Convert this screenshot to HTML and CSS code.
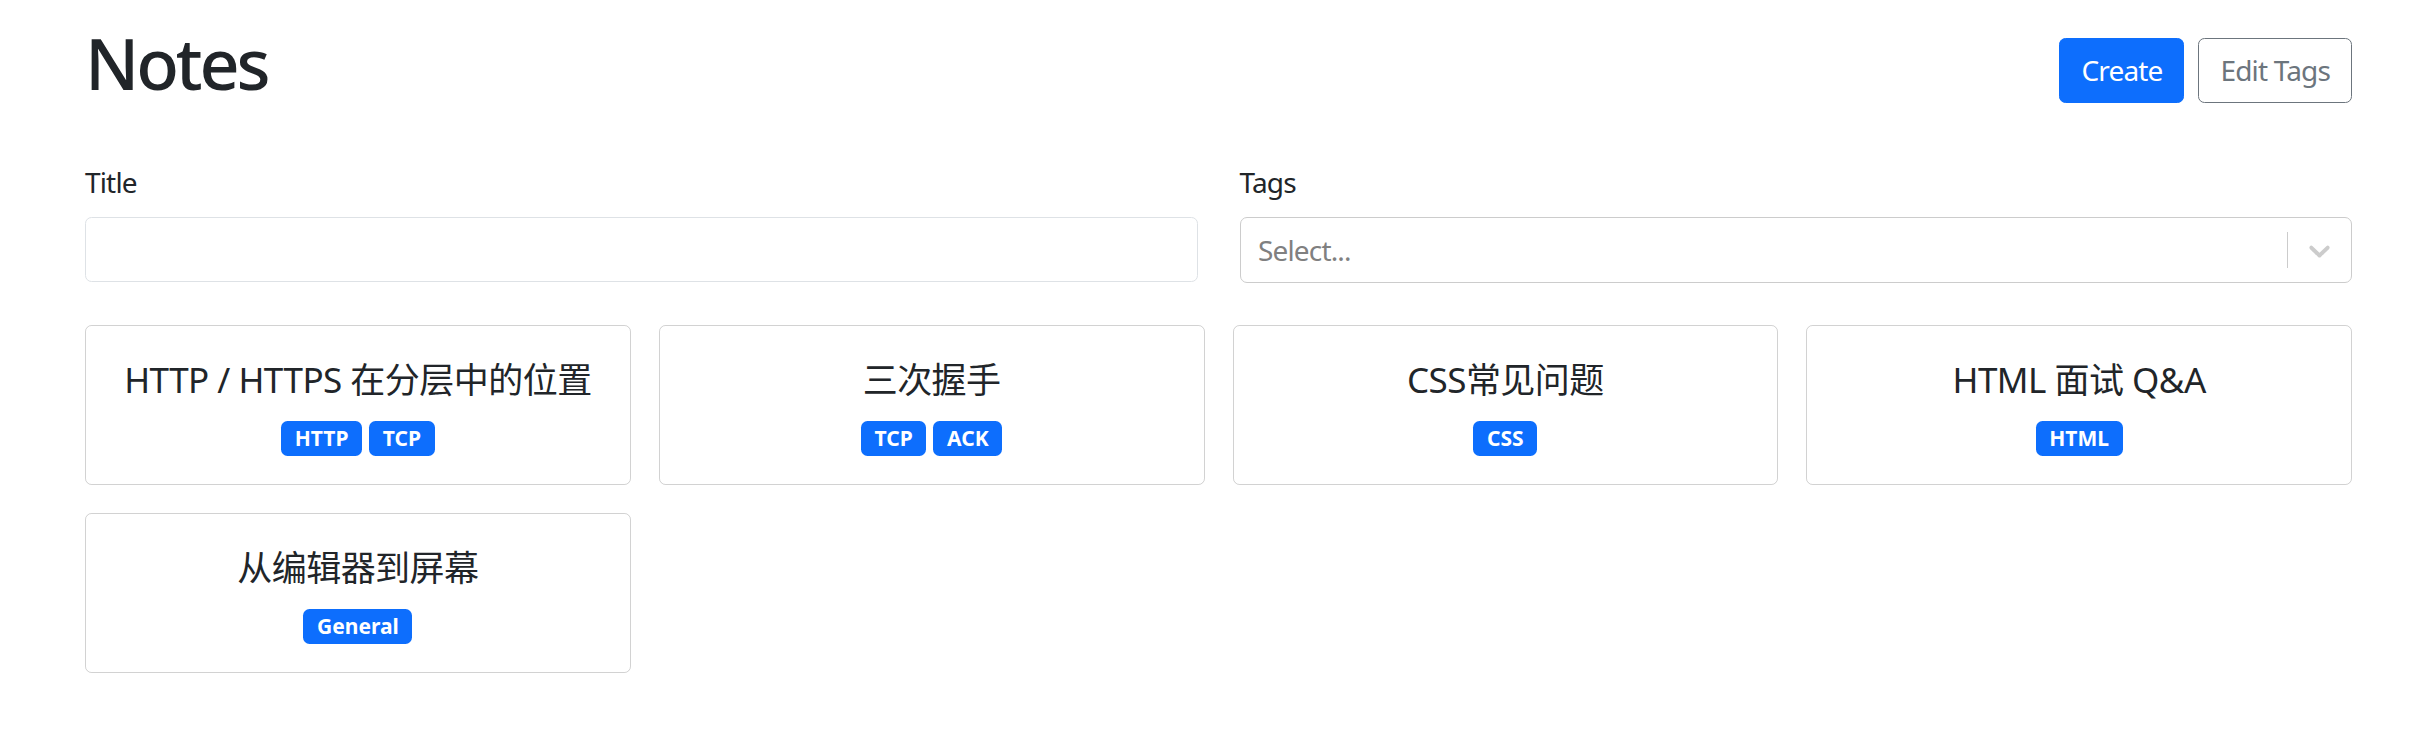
FILE: index.html
```html
<!DOCTYPE html>
<html lang="zh">
<head>
<meta charset="utf-8">
<title>Notes</title>
<link rel="stylesheet" href="styles.css">
</head>
<body>
<div class="page">
  <div class="header">
    <h1 class="heading">Notes</h1>
    <div class="actions">
      <button class="btn btn-primary">Create</button>
      <button class="btn btn-outline">Edit Tags</button>
    </div>
  </div>
  <form class="filters">
    <div class="field">
      <label class="label" for="title">Title</label>
      <input class="input" id="title" type="text">
    </div>
    <div class="field">
      <label class="label">Tags</label>
      <div class="select">
        <div class="select-value"><span class="placeholder">Select...</span></div>
        <div class="select-indicators">
          <span class="separator"></span>
          <span class="dropdown">
            <svg viewBox="0 0 20 20" width="35" height="35" aria-hidden="true"><path fill="currentColor" d="M4.516 7.548c0.436-0.446 1.043-0.481 1.576 0l3.908 3.747 3.908-3.747c0.533-0.481 1.141-0.446 1.574 0 0.436 0.445 0.408 1.197 0 1.615-0.406 0.418-4.695 4.502-4.695 4.502-0.217 0.223-0.502 0.335-0.787 0.335s-0.57-0.112-0.789-0.335c0 0-4.287-4.084-4.695-4.502s-0.436-1.17 0-1.615z"/></svg>
          </span>
        </div>
      </div>
    </div>
  </form>
  <div class="cards">
    <div class="card">
      <span class="card-title">HTTP / HTTPS 在分层中的位置</span>
      <div class="badges"><span class="badge">HTTP</span><span class="badge">TCP</span></div>
    </div>
    <div class="card">
      <span class="card-title">三次握手</span>
      <div class="badges"><span class="badge">TCP</span><span class="badge">ACK</span></div>
    </div>
    <div class="card">
      <span class="card-title">CSS常见问题</span>
      <div class="badges"><span class="badge">CSS</span></div>
    </div>
    <div class="card">
      <span class="card-title">HTML 面试 Q&amp;A</span>
      <div class="badges"><span class="badge">HTML</span></div>
    </div>
    <div class="card">
      <span class="card-title">从编辑器到屏幕</span>
      <div class="badges"><span class="badge">General</span></div>
    </div>
  </div>
</div>
</body>
</html>
```
FILE: styles.css
```css
* { box-sizing: border-box; }
html, body { margin: 0; background: #fff; }
body {
  font-family: "Noto Sans", "Noto Sans CJK SC", sans-serif;
  color: #212529;
  font-size: 28px;
  line-height: 42px;
  letter-spacing: -0.03em;
}
.page {
  padding: 21px 76px 0 85px;
}
.header {
  display: flex;
  align-items: center;
  justify-content: space-between;
  margin-bottom: 42px;
}
.heading {
  margin: 0 0 14px;
  font-size: 70px;
  line-height: 84px;
  font-weight: 500;
  letter-spacing: -0.045em;
}
.actions { display: flex; gap: 14px; }
.btn {
  font-family: inherit;
  font-size: 28px;
  line-height: 42px;
  letter-spacing: -0.03em;
  padding: 10.5px 21px;
  border: 1px solid transparent;
  border-radius: 6.5px;
  cursor: pointer;
}
.btn-primary { background: #0d6efd; border-color: #0d6efd; color: #fff; }
.btn-outline { background: transparent; border-color: #6c757d; color: #6c757d; }
.filters {
  display: grid;
  grid-template-columns: 1fr 1fr;
  column-gap: 42px;
  margin: 0 0 42px;
}
.label { display: block; margin-bottom: 14px; }
.input {
  display: block;
  width: 100%;
  height: 65px;
  border: 1px solid #dee2e6;
  border-radius: 6.5px;
  padding: 10.5px 21px;
  font-family: inherit;
  font-size: 28px;
}
.select {
  display: flex;
  height: 66px;
  border: 1px solid #ccc;
  border-radius: 7px;
  background: #fff;
}
.select-value {
  flex: 1;
  display: flex;
  align-items: center;
  padding: 3.5px 14px;
}
.placeholder { color: #808080; margin: 0 3.5px; }
.select-indicators { display: flex; align-items: stretch; }
.separator {
  width: 1px;
  background: #ccc;
  margin: 14px 0;
}
.dropdown {
  display: flex;
  align-items: center;
  padding: 14px;
  color: #ccc;
}
.dropdown svg { display: block; }
.cards {
  display: grid;
  grid-template-columns: repeat(4, 1fr);
  gap: 28px;
}
.card {
  border: 1px solid rgba(0, 0, 0, 0.175);
  border-radius: 6.5px;
  padding: 28px;
  display: flex;
  flex-direction: column;
  align-items: center;
  justify-content: center;
  gap: 14px;
}
.card-title { font-size: 35px; line-height: 52.5px; letter-spacing: -0.015em; }
.badges { display: flex; gap: 7px; justify-content: center; flex-wrap: wrap; }
.badge {
  background: #0d6efd;
  color: #fff;
  font-size: 21px;
  font-weight: 700;
  line-height: 1;
  letter-spacing: 0;
  padding: 7.35px 13.65px;
  border-radius: 6.5px;
}
```
